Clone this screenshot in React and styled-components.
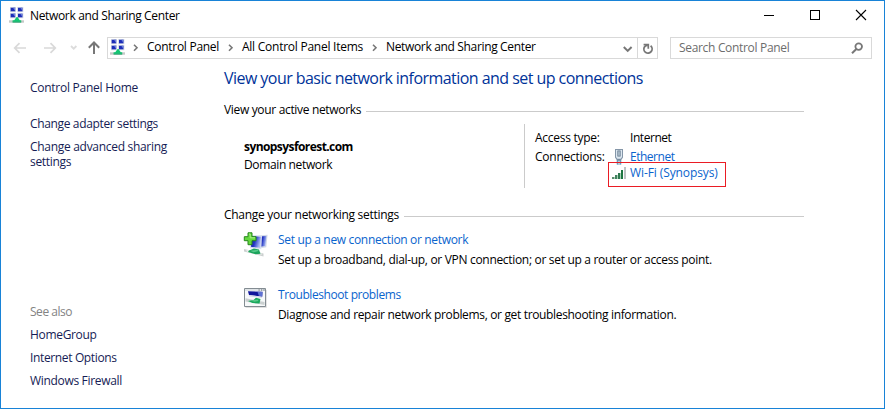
import React from 'react';
import styled, { createGlobalStyle } from 'styled-components';

const GlobalStyle = createGlobalStyle`
  * { box-sizing: border-box; }
  body { margin: 0; background: #fff; }
`;

const Window = styled.div`
  width: 885px;
  height: 409px;
  display: flex;
  flex-direction: column;
  border: 1px solid #1883d7;
  background: #fff;
  color: #000;
  font: 12px/15px "Open Sans", "Noto Sans", sans-serif;
  overflow: hidden;
  cursor: default;
`;

const Text = styled.span`
  display: block;
  white-space: nowrap;
  letter-spacing: ${(p) => p.$track || -0.3}px;
  font-weight: ${(p) => (p.$bold ? 700 : 400)};
`;

const Link = styled(Text).attrs({ as: 'a' })`
  color: #0a64cd;
`;

const TitleBar = styled.header`
  display: flex;
  height: 36px;
  flex: none;
  padding: 6px 18px 0 8px;
`;

const TitleText = styled(Text)`
  margin: 1px auto 0 5px;
`;

const Caption = styled.div`
  display: flex;
  gap: 36px;
  padding-top: 3px;
`;

const Toolbar = styled.nav`
  display: flex;
  height: 22px;
  flex: none;
  padding: 0 12px 0 12px;
`;

const History = styled.div`
  width: 94px;
  flex: none;
`;

const Field = styled.div`
  display: flex;
  width: ${(p) => p.$width}px;
  height: 22px;
  border: 1px solid #d9d9d9;
`;

const AddressField = styled(Field)`
  padding-left: 2px;
  margin-right: 12px;
`;

const CrumbIcon = styled.div`
  width: 20px;
  flex: none;
  padding-top: 1px;
`;

const Crumb = styled(Text)`
  width: ${(p) => p.$width}px;
  flex: none;
  padding-top: 1px;
`;

const Chevron = styled.svg`
  width: 17px;
  height: 20px;
  flex: none;
`;

const AddressButton = styled.div`
  width: 20px;
  height: 20px;
  margin-left: ${(p) => (p.$push ? 'auto' : 0)};
  border-left: ${(p) => (p.$divided ? '1px solid #d9d9d9' : 'none')};
`;

const SearchField = styled(Field)`
  justify-content: space-between;
  padding: 2px 8px 0 8px;
  color: #6d6d6d;
`;

const Body = styled.div`
  display: flex;
  flex: 1;
`;

const Sidebar = styled.aside`
  display: flex;
  flex-direction: column;
  width: 223px;
  padding: 21px 0 20px 29px;
  color: #151c55;
`;

const TaskList = styled.div`
  display: flex;
  flex-direction: column;
  gap: 8px;
  margin-top: ${(p) => p.$top};
`;

const Muted = styled(Text)`
  color: #838383;
`;

const Main = styled.main`
  width: 580px;
  padding-top: 9px;
`;

const Heading = styled.h1`
  margin: 0;
  font-size: 16px;
  font-weight: 400;
  line-height: 20px;
  letter-spacing: -0.55px;
  white-space: nowrap;
  color: #003399;
`;

const SectionTitle = styled.div`
  display: flex;
  gap: 5px;
  height: 15px;
  margin-top: ${(p) => p.$top}px;

  &::after {
    content: "";
    flex: 1;
    height: 1px;
    margin-top: 9px;
    background: #cbcbcb;
  }
`;

const Networks = styled.div`
  display: flex;
  height: 64px;
  margin-top: 7px;
`;

const NetworkName = styled.div`
  display: flex;
  flex-direction: column;
  gap: 3px;
  width: 300px;
  padding: 15px 0 0 20px;
`;

const Details = styled.div`
  display: grid;
  grid-template-columns: 79px 16px auto;
  grid-template-rows: 19px 16px 16px;
  align-content: start;
  padding: 6px 0 0 10px;
  border-left: 1px solid #cbcbcb;
`;

const Label = styled(Text)`
  grid-column: 1;
`;

const Value = styled(Text)`
  grid-column: 3;
`;

const Connection = styled.div`
  display: flex;
  position: relative;
  grid-column: 2 / 4;
`;

const IconSlot = styled.div`
  width: 16px;
  height: 15px;
  flex: none;
`;

const Marker = styled.div`
  position: absolute;
  left: -6px;
  top: -3px;
  width: 118px;
  height: 25px;
  border: 1px solid #ea1c24;
`;

const Action = styled.div`
  display: flex;
  height: 35px;
  margin-top: ${(p) => p.$top}px;
  padding-left: 20px;
`;

const ActionIcon = styled.div`
  width: 34px;
  flex: none;
`;

const ActionText = styled.div`
  display: flex;
  flex-direction: column;
  gap: 5px;
`;

const Icon = styled.svg`
  display: block;
  overflow: visible;
`;

const monitors = [[1, 0], [8.3, 0], [1, 6], [8.3, 6]];

function NetworkIcon() {
  return (
    <Icon width="16" height="17" viewBox="0 0 16 17">
      <path d="M0 13.3h15v2.4H0z" fill="#c6c9c8" />
      {monitors.map(([x, y]) => (
        <g key={`${x}-${y}`}>
          <path d={`M${x} ${y}h6v5.2h-6z`} fill="#cfd4e2" />
          <path d={`M${x + 0.7} ${y + 0.8}h4.4v3.5h-4.4z`} fill="#1c2db8" />
          <path d={`M${x + 5.1} ${y + 0.8}v3.2L${x + 3} ${y + 0.8}z`} fill="#6f84de" />
        </g>
      ))}
      <path d="M7.6 10h.9l2.3 3.2h1.4v2.1H3.6v-2.1h1.6z" fill="#12c672" />
      <path d="M3.6 14.6h8.6v1H3.6z" fill="#3ca579" />
    </Icon>
  );
}

function CaptionButtons() {
  return (
    <Caption>
      <Icon width="10" height="10" shapeRendering="crispEdges"><path d="M0 5.5h10" stroke="#000" /></Icon>
      <Icon width="10" height="10" shapeRendering="crispEdges"><path d="M.5.5h9v9h-9z" fill="none" stroke="#000" /></Icon>
      <Icon width="10" height="10"><path d="M0 0l10 10M10 0L0 10" stroke="#000" strokeWidth="1.1" /></Icon>
    </Caption>
  );
}

function HistoryArrows() {
  return (
    <History>
      <Icon width="94" height="22" fill="none">
        <path d="M13 11H2M6.5 6.2L1.7 11l4.8 4.8M31 11h11M37.5 6.2l4.8 4.8-4.8 4.8" stroke="#d9d9d9" strokeWidth="1.7" />
        <path d="M58 9l2.7 2.7L63.4 9" stroke="#dcdcdc" strokeWidth="1.8" />
        <path d="M81 17V6M75.8 10.7L81 5.5l5.2 5.2" stroke="#777" strokeWidth="2" />
      </Icon>
    </History>
  );
}

function CrumbArrow() {
  return (
    <Chevron viewBox="0 0 17 20">
      <path d="M4 6.7l3 3-3 3" fill="none" stroke="#777" strokeWidth="1.6" />
    </Chevron>
  );
}

function EthernetIcon() {
  return (
    <Icon width="16" height="16">
      <path d="M1 0h8v8.5L7.3 11v4.5H2.7V11L1 8.5z" fill="#8496a8" />
      <path d="M2 1h6v7L6.7 9.8H3.3L2 8z" fill="#dce7f0" />
      <path d="M3.4 1.5h3.2v6H3.4z" fill="#5e7488" />
      <path d="M4.5 2.3h1v4.5h-1z" fill="#e6f2fa" />
      <path d="M3.4 10.3h3.2v1.2H3.4z" fill="#71869b" />
      <path d="M3.3 11.8h1.2v3.7H3.3zM5.5 11.8h1.2v3.7H5.5z" fill="#49a9d8" />
      <path d="M4.5 11.8h1v3.7h-1z" fill="#fff" />
    </Icon>
  );
}

function SignalIcon() {
  return (
    <Icon width="16" height="15">
      <g transform="translate(-1 2)">
        <path d="M-1 10h2v2h-2z" fill="#5a8c6e" />
        <path d="M2 8h2v4H2z" fill="#438261" />
        <path d="M5 6h2v6H5z" fill="#2e794f" />
        <path d="M8 3h2v9H8z" fill="#1f7642" />
        <path d="M4 8h1v4H4zM7 6h1v6H7zM1 10h1v2H1z" fill="#a8d2b7" />
        <path d="M11 0h2v12h-2z" fill="#bfc3c4" />
      </g>
    </Icon>
  );
}

function NewConnectionIcon() {
  return (
    <Icon width="25" height="26">
      <defs>
        <linearGradient id="screen" x1="0" y1="0" x2="1" y2="0.3">
          <stop offset="0" stopColor="#0910a8" />
          <stop offset="0.5" stopColor="#2436c4" />
          <stop offset="1" stopColor="#a9baf3" />
        </linearGradient>
      </defs>
      <path d="M14 3.4l9.6-.6-1.3 12.4-7.3 1.2z" fill="#d2d9e7" />
      <path d="M15.5 4.6l7-.6-1.2 10-5 .8z" fill="url(#screen)" />
      <path d="M5 2.8l13 .7-.7 13.7-11.3-1z" fill="#dde3ef" />
      <path d="M6.5 4.2l10.4.5-.7 11-9-.8z" fill="url(#screen)" />
      <path d="M0 17l19.5 4.4v3L0 19.4z" fill="#cbd0cf" />
      <path d="M2 17.6l15.5 3.6.5 1.6-15-2.9z" fill="#e9eceb" />
      <path d="M10 16.5l5 1 1.5 4.2-5 .6L4 20.1l1-1.5z" fill="#1ca45c" />
      <path d="M6 18.8l8-1 .5 1.3-5 1.2z" fill="#55c889" />
      <path d="M4 .8h4v3.9h4v4H8v4H4v-4H.3v-4H4z" fill="#64d83f" stroke="#27871d" />
      <path d="M5 2h1.2v3.8h4.8" fill="none" stroke="#a9f183" />
    </Icon>
  );
}

function TroubleshootIcon() {
  return (
    <Icon width="25" height="23" viewBox="0 -1 25 23">
      <path d="M1.5 2h21.2v17.8H1.5z" fill="#d8d8d8" />
      <path d="M.5.5h21v18H.5z" fill="#f7f9fa" stroke="#838c92" />
      <path d="M1 1h20v2H1z" fill="#dfe4e7" />
      <path d="M14.5 2h1.2M17 2h1.2M19.4 2h1.2" stroke="#58636b" />
      <path d="M4 3.2l14.5.5-.3 5L5 6.9z" fill="#10169b" />
      <path d="M13.5 3.7l5 .2-.3 4.5-3.4-.6z" fill="#5e71d2" />
      <path d="M5 7.2l13 1.6V10L5.2 8.4z" fill="#d5daea" />
      <path d="M1.5 10.3l19 3.7v3l-19-3.5z" fill="#cad0d0" />
      <path d="M12 9.8l4.5 1.2-1 4.4-7-.3L4 13l5.5-1z" fill="#19a95c" />
      <path d="M6 12.6l7.5-1 1 1.3-4 .8z" fill="#59c889" />
    </Icon>
  );
}

export default function App() {
  return (
    <>
      <GlobalStyle />
      <Window>
        <TitleBar>
          <NetworkIcon />
          <TitleText $track={-0.34}>Network and Sharing Center</TitleText>
          <CaptionButtons />
        </TitleBar>

        <Toolbar>
          <HistoryArrows />
          <AddressField $width={551}>
            <CrumbIcon><NetworkIcon /></CrumbIcon>
            <CrumbArrow />
            <Crumb $width={78} $track={-0.28}>Control Panel</Crumb>
            <CrumbArrow />
            <Crumb $width={127} $track={-0.25}>All Control Panel Items</Crumb>
            <CrumbArrow />
            <Crumb $width={150} $track={-0.34}>Network and Sharing Center</Crumb>
            <AddressButton $push>
              <Icon width="20" height="20" fill="none"><path d="M6.8 9l3.9 3.9L14.6 9" stroke="#777" strokeWidth="2" /></Icon>
            </AddressButton>
            <AddressButton $divided>
              <Icon width="19" height="20" fill="none">
                <path d="M12.6 7.8a4.1 4.1 0 1 1-6.2 1.2c.6-1 1.5-1.7 3.4-1.7" stroke="#777" strokeWidth="1.8" />
                <path d="M5.6 6.6h4.7v4.2" stroke="#777" strokeWidth="1.7" />
              </Icon>
            </AddressButton>
          </AddressField>
          <SearchField $width={202}>
            <Text $track={-0.32}>Search Control Panel</Text>
            <Icon width="12" height="15" fill="none" stroke="#777">
              <circle cx="7.7" cy="6.6" r="3.3" strokeWidth="1.8" />
              <path d="M5.4 9L1 13.2" strokeWidth="2" />
            </Icon>
          </SearchField>
        </Toolbar>

        <Body>
          <Sidebar>
            <Text $track={-0.26}>Control Panel Home</Text>
            <TaskList $top="21px">
              <Text $track={-0.35}>Change adapter settings</Text>
              <Text $track={-0.3}>Change advanced sharing<br />settings</Text>
            </TaskList>
            <TaskList $top="auto">
              <Muted $track={-0.46}>See also</Muted>
              <Text $track={-0.32}>HomeGroup</Text>
              <Text $track={-0.36}>Internet Options</Text>
              <Text $track={-0.32}>Windows Firewall</Text>
            </TaskList>
          </Sidebar>

          <Main>
            <Heading>View your basic network information and set up connections</Heading>
            <SectionTitle $top={14}><Text $track={-0.33}>View your active networks</Text></SectionTitle>
            <Networks>
              <NetworkName>
                <Text $bold $track={-0.57}>synopsysforest.com</Text>
                <Text $track={-0.37}>Domain network</Text>
              </NetworkName>
              <Details>
                <Label $track={-0.28}>Access type:</Label>
                <Value $track={-0.45}>Internet</Value>
                <Label $track={-0.25}>Connections:</Label>
                <Connection>
                  <IconSlot><EthernetIcon /></IconSlot>
                  <Link $track={-0.48}>Ethernet</Link>
                </Connection>
                <Connection>
                  <IconSlot><SignalIcon /></IconSlot>
                  <Link $track={-0.1}>Wi-Fi (Synopsys)</Link>
                  <Marker />
                </Connection>
              </Details>
            </Networks>

            <SectionTitle $top={19}><Text $track={-0.28}>Change your networking settings</Text></SectionTitle>
            <Action $top={10}>
              <ActionIcon><NewConnectionIcon /></ActionIcon>
              <ActionText>
                <Link $track={-0.33}>Set up a new connection or network</Link>
                <Text $track={-0.315}>Set up a broadband, dial-up, or VPN connection; or set up a router or access point.</Text>
              </ActionText>
            </Action>
            <Action $top={20}>
              <ActionIcon><TroubleshootIcon /></ActionIcon>
              <ActionText>
                <Link $track={-0.42}>Troubleshoot problems</Link>
                <Text $track={-0.34}>Diagnose and repair network problems, or get troubleshooting information.</Text>
              </ActionText>
            </Action>
          </Main>
        </Body>
      </Window>
    </>
  );
}
